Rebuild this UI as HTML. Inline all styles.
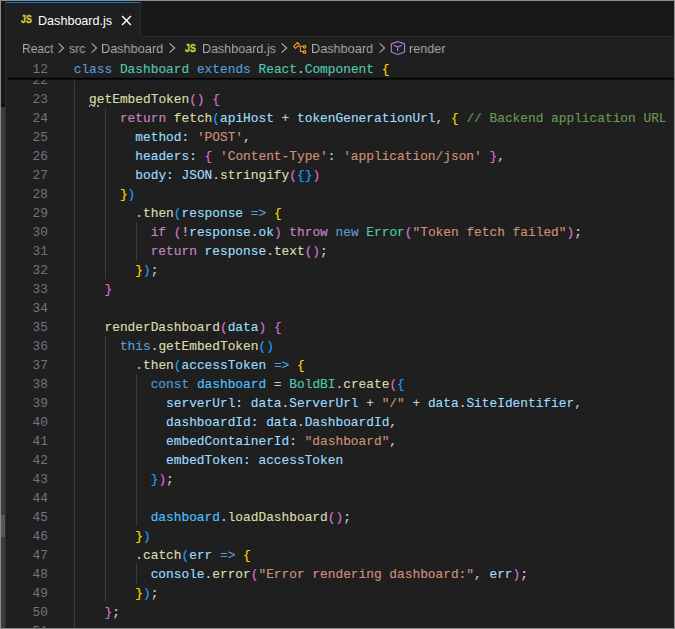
<!DOCTYPE html>
<html><head><meta charset="utf-8"><title>Dashboard.js</title>
<style>
html,body{margin:0;padding:0}
body{width:675px;height:629px;overflow:hidden;position:relative;background:#8c8c8c;font-family:"Liberation Sans",sans-serif}
#win{position:absolute;left:1px;top:1px;width:673px;height:627px;background:#1f1f1f;overflow:hidden}
.abs{position:absolute}
/* editor */
#ed{position:absolute;left:0;top:0;width:675px;height:629px;overflow:hidden}
.ln,.cl{position:absolute;height:19px;line-height:19px;font-family:"Liberation Mono",monospace;font-size:12.832px;white-space:pre}
.ln{left:6.6px;width:41.4px;text-align:right;color:#6e7681}
.cl{left:73.7px;color:#cccccc;-webkit-text-stroke:0.15px currentColor}
.g{position:absolute;width:1px;background:#3c3c3c}
.k{color:#569cd6}.c{color:#c586c0}.t{color:#4ec9b0}.f{color:#dcdcaa}.v{color:#9cdcfe}.n{color:#4fc1ff}
.s{color:#ce9178}.m{color:#6a9955}.d{color:#cccccc}.b1{color:#ffd700}.b2{color:#da70d6}.b3{color:#179fff}
#sticky{position:absolute;left:6px;top:58.6px;width:668px;height:19px;background:#1f1f1f;}
#shadow{position:absolute;left:7px;top:77px;width:668px;height:4px;background:linear-gradient(to bottom,rgba(0,0,0,.1) 0,rgba(0,0,0,.1) 1px,#000 1px,#000 2px,rgba(0,0,0,.55) 2px,rgba(0,0,0,.55) 3px,rgba(0,0,0,.1) 3px,rgba(0,0,0,.1) 4px)}
#shadowl{position:absolute;left:7px;top:77px;width:2px;height:4px;background:linear-gradient(to right,#1f1f1f,rgba(31,31,31,0))}
.dot{position:absolute;top:105px;width:1.6px;height:1.8px;background:#a8a8a8}
#sticky .ln{left:0.6px}
#sticky .cl{left:67.7px}
/* tabs */
#tabs{position:absolute;left:0;top:0;width:675px;height:36.6px;background:#181818}
#tabsb{position:absolute;left:6px;top:35.6px;width:669px;height:1px;background:#2b2b2b}
#tab{position:absolute;left:6px;top:1.6px;width:134px;height:35.4px;background:#1f1f1f;border-right:1px solid #2b2b2b}
#tabtop{position:absolute;left:6px;top:1.6px;width:134px;height:1px;background:#0078d4}
.js{position:absolute;color:#cbcb41;-webkit-text-stroke:0.35px #cbcb41;font-weight:bold;font-size:11.2px;line-height:12px;transform-origin:0 0;transform:scaleX(.79);letter-spacing:0}
#tabname{position:absolute;left:37.7px;top:13px;font-size:13px;line-height:16px;color:#fff;white-space:pre;transform-origin:0 0;transform:scaleX(.968)}
/* breadcrumbs */
#bc{position:absolute;left:6px;top:36.6px;width:669px;height:22px;background:#1f1f1f}
.b{position:absolute;top:40.6px;font-size:13px;line-height:16px;color:#a9a9a9;white-space:pre;transform-origin:0 0;will-change:transform}
.ch{position:absolute;top:42px;width:8px;height:12px}
/* left strip */
#ls1{position:absolute;left:0;top:0;width:5px;height:103px;background:#181818}
#ls2{position:absolute;left:0;top:103px;width:5px;height:4px;background:#0e0e0e}
#ls3{position:absolute;left:0;top:107px;width:5px;height:522px;background:#3c3c3c}
#ls4{position:absolute;left:0;top:515px;width:5px;height:22px;background:#58585c}
#lsb{position:absolute;left:5px;top:0;width:1px;height:629px;background:#2b2b2b}
</style></head>
<body>
<div id="win"><div class="abs" style="left:-1px;top:-1px;width:675px;height:629px">
<div id="ed">
<div class="g" style="left:74.0px;top:69.6px;height:589.0px"></div>
<div class="g" style="left:105.0px;top:107.6px;height:171.0px"></div>
<div class="g" style="left:136.0px;top:221.6px;height:38.0px"></div>
<div class="g" style="left:105.0px;top:335.6px;height:266.0px"></div>
<div class="g" style="left:136.0px;top:373.6px;height:152.0px"></div>
<div class="g" style="left:136.0px;top:563.6px;height:19.0px"></div>
<div class="ln" style="top:70.6px">22</div>
<div class="ln" style="top:89.6px">23</div>
<div class="cl" style="top:89.6px"><span class="d">  </span><span class="f">getEmbedToken</span><span class="b2">()</span><span class="d"> </span><span class="b2">{</span></div>
<div class="ln" style="top:108.6px">24</div>
<div class="cl" style="top:108.6px"><span class="d">      </span><span class="c">return</span><span class="d"> </span><span class="f">fetch</span><span class="b3">(</span><span class="v">apiHost</span><span class="d"> + </span><span class="v">tokenGenerationUrl</span><span class="d">, </span><span class="b1">{</span><span class="d"> </span><span class="m">// Backend application URL</span></div>
<div class="ln" style="top:127.6px">25</div>
<div class="cl" style="top:127.6px"><span class="d">        </span><span class="v">method:</span><span class="d"> </span><span class="s">'POST'</span><span class="d">,</span></div>
<div class="ln" style="top:146.6px">26</div>
<div class="cl" style="top:146.6px"><span class="d">        </span><span class="v">headers:</span><span class="d"> </span><span class="b2">{</span><span class="d"> </span><span class="s">'Content-Type'</span><span class="v">:</span><span class="d"> </span><span class="s">'application/json'</span><span class="d"> </span><span class="b2">}</span><span class="d">,</span></div>
<div class="ln" style="top:165.6px">27</div>
<div class="cl" style="top:165.6px"><span class="d">        </span><span class="v">body:</span><span class="d"> </span><span class="v">JSON</span><span class="d">.</span><span class="f">stringify</span><span class="b2">(</span><span class="b3">{}</span><span class="b2">)</span></div>
<div class="ln" style="top:184.6px">28</div>
<div class="cl" style="top:184.6px"><span class="d">      </span><span class="b1">}</span><span class="b3">)</span></div>
<div class="ln" style="top:203.6px">29</div>
<div class="cl" style="top:203.6px"><span class="d">        .</span><span class="f">then</span><span class="b3">(</span><span class="v">response</span><span class="d"> </span><span class="k">=&gt;</span><span class="d"> </span><span class="b1">{</span></div>
<div class="ln" style="top:222.6px">30</div>
<div class="cl" style="top:222.6px"><span class="d">          </span><span class="c">if</span><span class="d"> </span><span class="b2">(</span><span class="d">!</span><span class="v">response</span><span class="d">.</span><span class="v">ok</span><span class="b2">)</span><span class="d"> </span><span class="c">throw</span><span class="d"> </span><span class="k">new</span><span class="d"> </span><span class="t">Error</span><span class="b2">(</span><span class="s">"Token fetch failed"</span><span class="b2">)</span><span class="d">;</span></div>
<div class="ln" style="top:241.6px">31</div>
<div class="cl" style="top:241.6px"><span class="d">          </span><span class="c">return</span><span class="d"> </span><span class="v">response</span><span class="d">.</span><span class="f">text</span><span class="b2">()</span><span class="d">;</span></div>
<div class="ln" style="top:260.6px">32</div>
<div class="cl" style="top:260.6px"><span class="d">        </span><span class="b1">}</span><span class="b3">)</span><span class="d">;</span></div>
<div class="ln" style="top:279.6px">33</div>
<div class="cl" style="top:279.6px"><span class="d">    </span><span class="b2">}</span></div>
<div class="ln" style="top:298.6px">34</div>
<div class="ln" style="top:317.6px">35</div>
<div class="cl" style="top:317.6px"><span class="d">    </span><span class="f">renderDashboard</span><span class="b2">(</span><span class="v">data</span><span class="b2">)</span><span class="d"> </span><span class="b2">{</span></div>
<div class="ln" style="top:336.6px">36</div>
<div class="cl" style="top:336.6px"><span class="d">      </span><span class="k">this</span><span class="d">.</span><span class="f">getEmbedToken</span><span class="b3">()</span></div>
<div class="ln" style="top:355.6px">37</div>
<div class="cl" style="top:355.6px"><span class="d">        .</span><span class="f">then</span><span class="b3">(</span><span class="v">accessToken</span><span class="d"> </span><span class="k">=&gt;</span><span class="d"> </span><span class="b1">{</span></div>
<div class="ln" style="top:374.6px">38</div>
<div class="cl" style="top:374.6px"><span class="d">          </span><span class="k">const</span><span class="d"> </span><span class="n">dashboard</span><span class="d"> = </span><span class="t">BoldBI</span><span class="d">.</span><span class="f">create</span><span class="b2">(</span><span class="b3">{</span></div>
<div class="ln" style="top:393.6px">39</div>
<div class="cl" style="top:393.6px"><span class="d">            </span><span class="v">serverUrl:</span><span class="d"> </span><span class="v">data</span><span class="d">.</span><span class="v">ServerUrl</span><span class="d"> + </span><span class="s">"/"</span><span class="d"> + </span><span class="v">data</span><span class="d">.</span><span class="v">SiteIdentifier</span><span class="d">,</span></div>
<div class="ln" style="top:412.6px">40</div>
<div class="cl" style="top:412.6px"><span class="d">            </span><span class="v">dashboardId:</span><span class="d"> </span><span class="v">data</span><span class="d">.</span><span class="v">DashboardId</span><span class="d">,</span></div>
<div class="ln" style="top:431.6px">41</div>
<div class="cl" style="top:431.6px"><span class="d">            </span><span class="v">embedContainerId:</span><span class="d"> </span><span class="s">"dashboard"</span><span class="d">,</span></div>
<div class="ln" style="top:450.6px">42</div>
<div class="cl" style="top:450.6px"><span class="d">            </span><span class="v">embedToken:</span><span class="d"> </span><span class="v">accessToken</span></div>
<div class="ln" style="top:469.6px">43</div>
<div class="cl" style="top:469.6px"><span class="d">          </span><span class="b3">}</span><span class="b2">)</span><span class="d">;</span></div>
<div class="ln" style="top:488.6px">44</div>
<div class="ln" style="top:507.6px">45</div>
<div class="cl" style="top:507.6px"><span class="d">          </span><span class="n">dashboard</span><span class="d">.</span><span class="f">loadDashboard</span><span class="b2">()</span><span class="d">;</span></div>
<div class="ln" style="top:526.6px">46</div>
<div class="cl" style="top:526.6px"><span class="d">        </span><span class="b1">}</span><span class="b3">)</span></div>
<div class="ln" style="top:545.6px">47</div>
<div class="cl" style="top:545.6px"><span class="d">        .</span><span class="f">catch</span><span class="b3">(</span><span class="v">err</span><span class="d"> </span><span class="k">=&gt;</span><span class="d"> </span><span class="b1">{</span></div>
<div class="ln" style="top:564.6px">48</div>
<div class="cl" style="top:564.6px"><span class="d">          </span><span class="v">console</span><span class="d">.</span><span class="f">error</span><span class="b2">(</span><span class="s">"Error rendering dashboard:"</span><span class="d">, </span><span class="v">err</span><span class="b2">)</span><span class="d">;</span></div>
<div class="ln" style="top:583.6px">49</div>
<div class="cl" style="top:583.6px"><span class="d">        </span><span class="b1">}</span><span class="b3">)</span><span class="d">;</span></div>
<div class="ln" style="top:602.6px">50</div>
<div class="cl" style="top:602.6px"><span class="d">    </span><span class="b2">}</span><span class="d">;</span></div>
<div class="ln" style="top:621.6px">51</div>
</div>
<div id="sticky">
<div class="ln" style="top:1.0px">12</div>
<div class="cl" style="top:1.0px"><span class="k">class</span><span class="d"> </span><span class="t">Dashboard</span><span class="d"> </span><span class="k">extends</span><span class="d"> </span><span class="t">React</span><span class="d">.</span><span class="t">Component</span><span class="d"> </span><span class="b1">{</span></div>
</div>
<div id="shadow"></div><div id="shadowl"></div>
<div class="dot" style="left:88.8px"></div><div class="dot" style="left:93px"></div><div class="dot" style="left:97.3px"></div>
<div id="tabs"></div>
<div id="tabsb"></div>
<div id="tab"></div>
<div id="tabtop"></div>
<div class="js" style="left:20.9px;top:13.4px">JS</div>
<div id="tabname">Dashboard.js</div>
<svg class="abs" style="left:120.8px;top:14.5px" width="11" height="11" viewBox="0 0 11 11"><path d="M1.1 1.1 L9.9 9.9 M9.9 1.1 L1.1 9.9" stroke="#ffffff" stroke-width="1.45" fill="none"/></svg>
<div id="bc"></div>
<div class="b" style="left:21.5px;transform:scaleX(0.927)">React</div>
<svg class="ch" style="left:57.25px" viewBox="0 0 8 12"><path d="M1.6 1.4 L6.6 6 L1.6 10.6" stroke="#a9a9a9" stroke-width="1.15" fill="none"/></svg>
<div class="b" style="left:69.3px;transform:scaleX(0.95)">src</div>
<svg class="ch" style="left:89.85px" viewBox="0 0 8 12"><path d="M1.6 1.4 L6.6 6 L1.6 10.6" stroke="#a9a9a9" stroke-width="1.15" fill="none"/></svg>
<div class="b" style="left:101.0px;transform:scaleX(0.98)">Dashboard</div>
<svg class="ch" style="left:168.40px" viewBox="0 0 8 12"><path d="M1.6 1.4 L6.6 6 L1.6 10.6" stroke="#a9a9a9" stroke-width="1.15" fill="none"/></svg>
<div class="js" style="left:184.5px;top:42.3px">JS</div>
<div class="b" style="left:202.4px;transform:scaleX(0.966)">Dashboard.js</div>
<svg class="ch" style="left:280.30px" viewBox="0 0 8 12"><path d="M1.6 1.4 L6.6 6 L1.6 10.6" stroke="#a9a9a9" stroke-width="1.15" fill="none"/></svg>
<div class="b" style="left:310.6px;transform:scaleX(0.978)">Dashboard</div>
<svg class="ch" style="left:377.85px" viewBox="0 0 8 12"><path d="M1.6 1.4 L6.6 6 L1.6 10.6" stroke="#a9a9a9" stroke-width="1.15" fill="none"/></svg>
<div class="b" style="left:408.9px;transform:scaleX(0.976)">render</div>
<svg class="abs" style="left:288px;top:38px" width="24" height="22" viewBox="0 0 24 22" fill="none" stroke="#ee9d28" stroke-width="1.05" stroke-linejoin="round">
<path d="M9.55 4.48 L11.45 6.38 L7.49 10.34 L5.59 8.44 Z"/>
<circle cx="16.52" cy="8.81" r="1.3" stroke-width="1.25"/><circle cx="16.52" cy="14.0" r="1.3" stroke-width="1.25"/>
<path d="M10.4 8.2 H15 M12.4 8.2 V13.5 H15"/>
</svg>
<svg class="abs" style="left:388px;top:38px" width="20" height="20" viewBox="0 0 20 20" fill="none" stroke="#b180d7" stroke-width="1.1" stroke-linejoin="round" stroke-linecap="round">
<path d="M9.86 3.5 L16.53 5.88 V14.0 L9.86 16.53 L3.34 14.0 V5.88 Z"/>
<path d="M6.2 7.47 L9.7 9.06 L13.35 7.47 M9.7 9.06 V12.72" stroke-width="1.2"/>
</svg>
<div id="ls1"></div><div id="ls2"></div><div id="ls3"></div><div id="ls4"></div><div id="lsb"></div>
</div></div>
</body></html>
